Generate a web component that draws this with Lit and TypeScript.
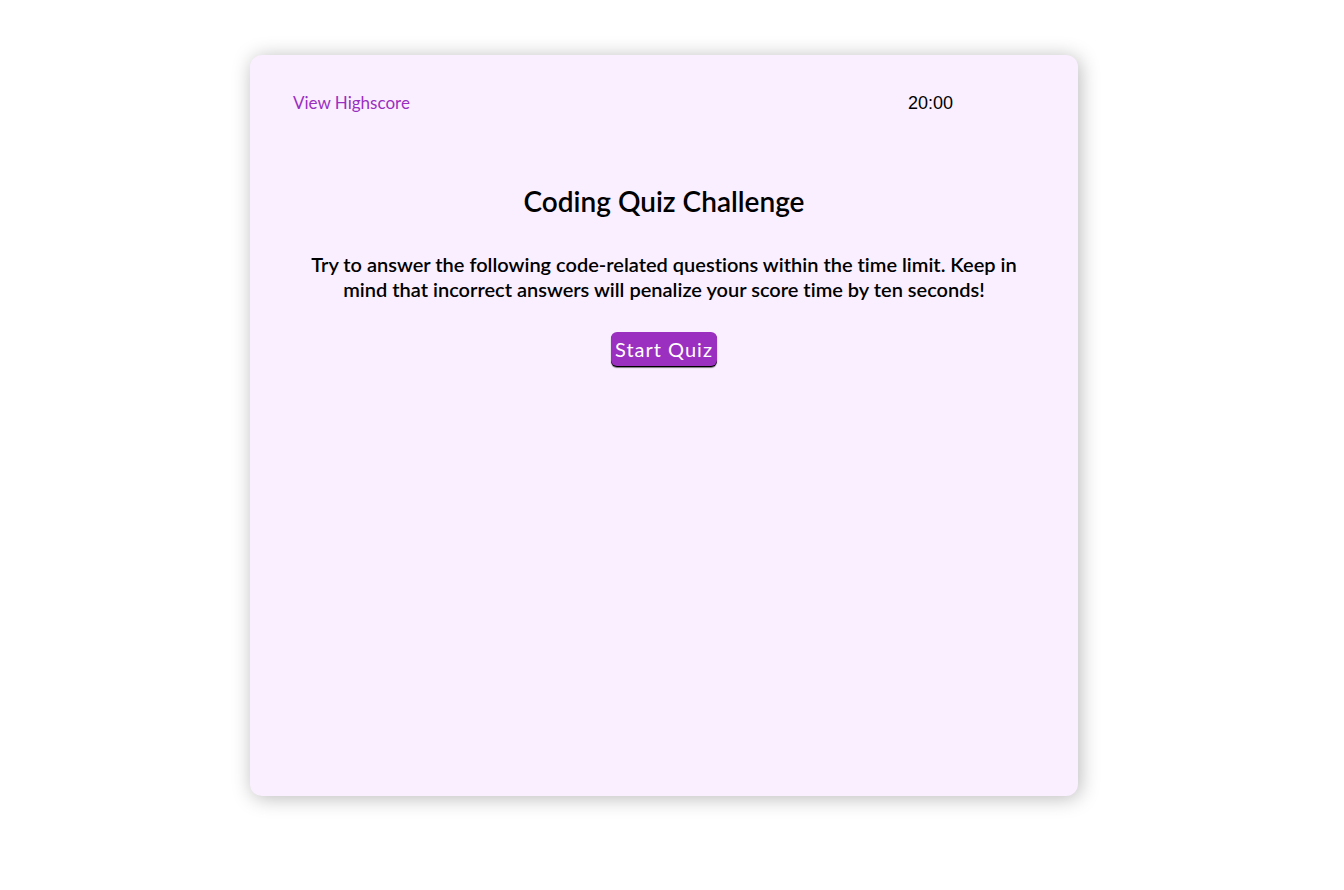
import { LitElement, html, css } from "lit";
import { customElement, property } from "lit/decorators.js";

@customElement("app-root")
export class AppRoot extends LitElement {
  @property({ type: String }) time = "20:00";

  static styles = css`
    :host {
      display: block;
      box-sizing: border-box;
      min-height: 100vh;
      padding: 55px 16px 94px 0;
      background: #ffffff;
      color: #000000;
      font-family: Lato, "Open Sans", sans-serif;
      font-variant-ligatures: none;
    }
    .card {
      box-sizing: border-box;
      width: 100%;
      max-width: 828px;
      min-height: calc(100vh - 149px);
      margin: 0 auto;
      padding: 36px 43px;
      border-radius: 12px;
      background: #faefff;
      box-shadow: 2px 2px 20px rgba(0, 0, 0, 0.28);
    }
    .bar {
      display: flex;
      justify-content: space-between;
      align-items: center;
      padding-right: 82px;
      font-size: 18px;
      line-height: 24px;
    }
    .scores {
      color: #9a2fbf;
      font-size: 17px;
      text-decoration: none;
    }
    .timer {
      font-family: "Liberation Sans", Arial, sans-serif;
    }
    .intro {
      display: flex;
      flex-direction: column;
      align-items: center;
      padding-top: 68px;
      text-align: center;
    }
    .title {
      margin: 0;
      font-size: 28px;
      line-height: 36px;
      font-weight: 600;
    }
    .text {
      margin: 33px 0 30px;
      font-size: 20px;
      line-height: 25px;
      font-weight: 600;
    }
    .start {
      height: 34px;
      padding: 0 4px;
      border: 0;
      border-radius: 6px;
      background: #9b2fc0;
      box-shadow: 0 1px 0 #000000, 0 2px 1px rgba(0, 0, 0, 0.5);
      color: #ffffff;
      font-family: inherit;
      font-size: 20px;
      letter-spacing: 1px;
      line-height: 24px;
      cursor: pointer;
    }
  `;

  render() {
    return html`
      <main class="card">
        <header class="bar">
          <a class="scores" href="#highscore">View Highscore</a>
          <span class="timer">${this.time}</span>
        </header>
        <section class="intro">
          <h1 class="title">Coding Quiz Challenge</h1>
          <p class="text">
            Try to answer the following code-related questions within the time
            limit. Keep in mind that incorrect answers will penalize your score
            time by ten seconds!
          </p>
          <button class="start" type="button">Start Quiz</button>
        </section>
      </main>
    `;
  }
}
